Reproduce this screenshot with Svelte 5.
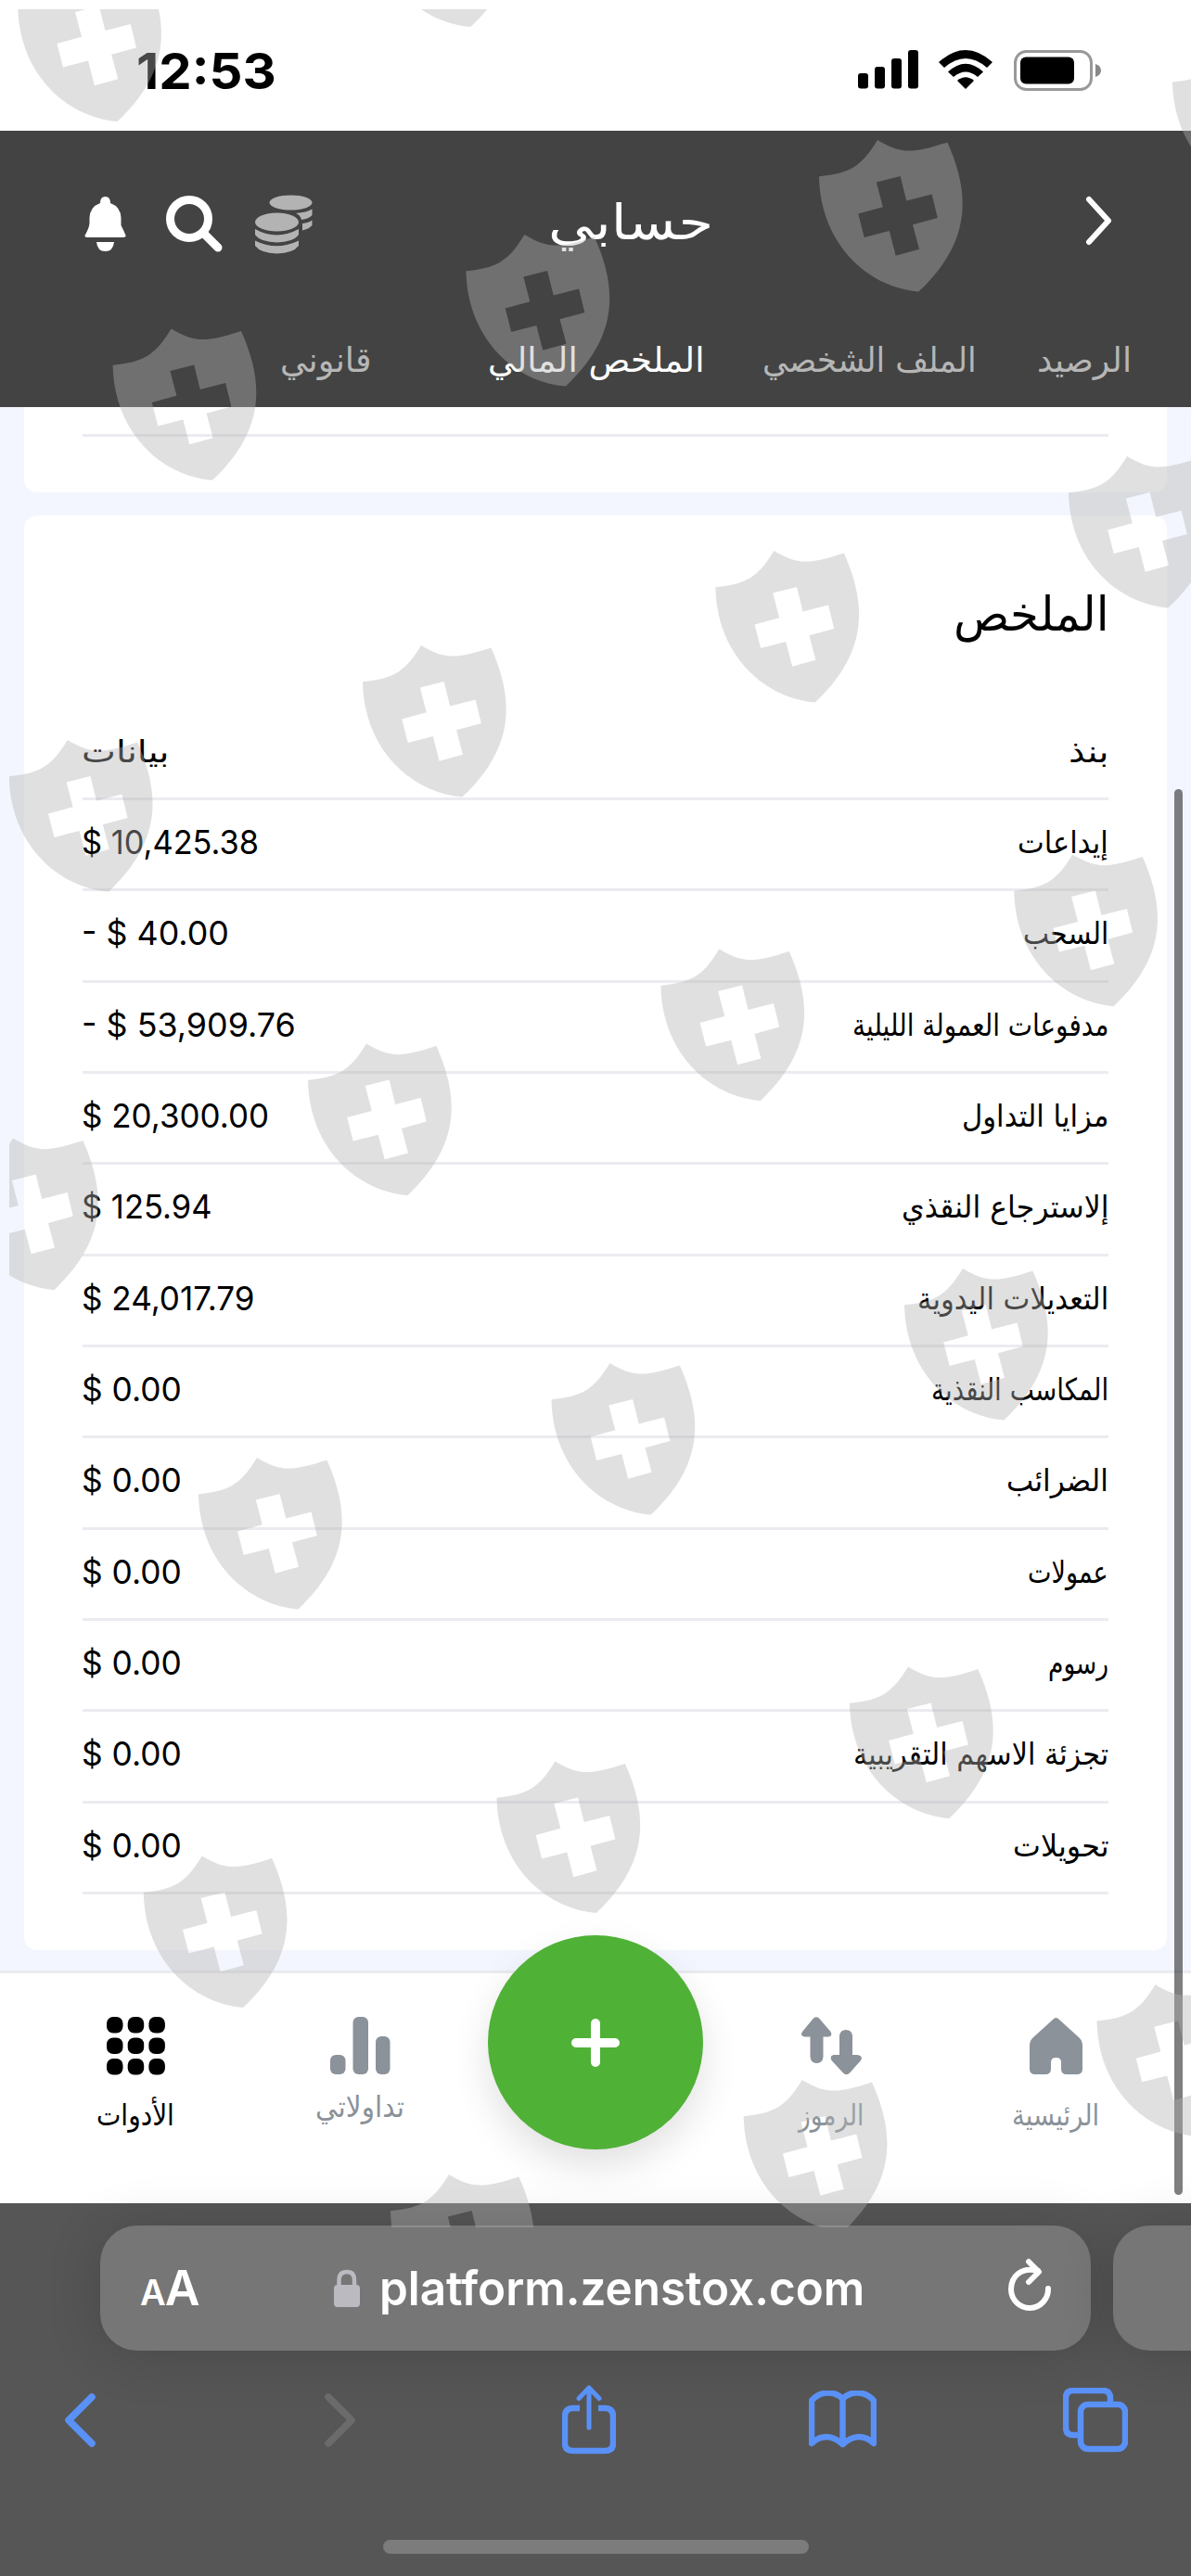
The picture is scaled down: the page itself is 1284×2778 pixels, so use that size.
<script>
  const tabs = [
    { name: "الرصيد", width: 102, gap: 65 },
    { name: "الملف الشخصي", width: 231, gap: 63 },
    { name: "الملخص المالي", width: 234, gap: 124, active: true },
    { name: "قانوني", width: 99, gap: 0 },
  ];

  const rows = [
    { label: "إيداعات", labelWidth: 98, value: "$ 10,425.38", valueWidth: 191 },
    { label: "السحب", labelWidth: 92, value: "- $ 40.00", valueWidth: 159 },
    {
      label: "مدفوعات العمولة الليلية",
      labelWidth: 276,
      value: "- $ 53,909.76",
      valueWidth: 231,
    },
    { label: "مزايا التداول", labelWidth: 158, value: "$ 20,300.00", valueWidth: 202 },
    { label: "إلاسترجاع النقذي", labelWidth: 223, value: "$ 125.94", valueWidth: 140 },
    { label: "التعديلات اليدوية", labelWidth: 206, value: "$ 24,017.79", valueWidth: 187 },
    { label: "المكاسب النقذية", labelWidth: 191, value: "$ 0.00", valueWidth: 108 },
    { label: "الضرائب", labelWidth: 110, value: "$ 0.00", valueWidth: 108 },
    { label: "عمولات", labelWidth: 87, value: "$ 0.00", valueWidth: 108 },
    { label: "رسوم", labelWidth: 65, value: "$ 0.00", valueWidth: 108 },
    {
      label: "تجزئة الاسهم التقريبية",
      labelWidth: 275,
      value: "$ 0.00",
      valueWidth: 108,
    },
    { label: "تحويلات", labelWidth: 103, value: "$ 0.00", valueWidth: 108 },
  ];

  const shields = [
    [19.2, -32.5],
    [400, -134.5],
    [1264, 49],
    [883, 151],
    [502.5, 253],
    [121.6, 354.5],
    [1152, 492],
    [771.4, 594],
    [391, 696],
    [9.8, 798],
    [1093.3, 921.6],
    [712.4, 1023.6],
    [332, 1125.6],
    [-49, 1227.6],
    [975, 1368],
    [594.5, 1470],
    [214, 1572],
    [916, 1797.5],
    [535.5, 1899.5],
    [154.8, 2001.5],
    [1182.5, 2140.3],
    [801.7, 2243],
    [421, 2345],
  ];

  const dots = [0, 1, 2, 3, 4, 5, 6, 7, 8];

  // Scales a text horizontally so that it fills the given width
  function squeeze(node, width) {
    const rtl = getComputedStyle(node).direction === "rtl";
    node.style.transformOrigin = rtl ? "right center" : "left center";
    node.style.transform = `scaleX(${width / node.offsetWidth})`;
  }
</script>

{#snippet fitted(text, width)}
  <span class="fitted" style:width="{width}px"
    ><span class="inner" use:squeeze={width}>{text}</span></span
  >
{/snippet}

<div class="screen">
  <div class="status">
    <div class="time">{@render fitted("12:53", 151)}</div>
    <svg class="signal" width="65" height="42" viewBox="0 0 65 42">
      <rect x="0" y="25" width="11" height="16.500" rx="3" />
      <rect x="18" y="18" width="11" height="23.500" rx="3" />
      <rect x="36" y="9" width="11" height="32.500" rx="3" />
      <rect x="54" y="0" width="11" height="41.500" rx="3" />
    </svg>
    <svg class="wifi" width="58" height="42" viewBox="0 0 58 42">
      <path d="M0 13 Q29 -13 58 13 L52 19 Q29 -1 6 19Z" />
      <path d="M10 23.500 Q29 6 48 23.500 L42 29 Q29 18 16 29Z" />
      <path d="M20 33 Q29 25.500 38 33 L29 42Z" />
    </svg>
    <svg width="95" height="44" viewBox="0 0 95 44">
      <rect x="1.500" y="1.500" width="82" height="41" rx="12" fill="none" stroke="#999" stroke-width="3" />
      <rect x="7" y="7.500" width="58" height="29" rx="6" />
      <path d="M88 15 Q94 17 94 22 Q94 27 88 29Z" fill="#888" />
    </svg>
  </div>

  <header dir="rtl">
    <div class="bar">
      <svg class="forward" width="30" height="54" viewBox="0 0 30 54">
        <path d="M4 4 L25 27 L4 50" />
      </svg>
      <h1>{@render fitted("حسابي", 178)}</h1>
      <svg class="coins" width="62" height="64" viewBox="0 0 62 64">
        <ellipse cx="38.500" cy="8.500" rx="23" ry="8" />
        <path d="M44 20 Q56 19 61.500 15.500 V22 Q58 26 50 27 Q49 22 44 20Z" />
        <path d="M51 31 Q58 30 61.500 27.500 V33 Q58 37 51 38.500Z" />
        <ellipse cx="23.500" cy="29.500" rx="23.500" ry="10" />
        <path d="M0 37 Q23 50 47 37 V43 Q42 51 23.500 51.500 Q5 51 0 43Z" />
        <path d="M0 49.500 Q23 61 47 49.500 V55 Q41 63 23.500 63.500 Q6 63 0 55Z" />
      </svg>
      <svg class="search" width="61" height="62" viewBox="0 0 61 62">
        <circle cx="25" cy="26" r="20.500" />
        <path d="M42 43 L56 57" />
      </svg>
      <svg class="bell" width="45" height="60" viewBox="0 0 45 60">
        <path
          d="M17 7 Q17 0 22.500 0 Q28 0 28 7 Q39 11 39.500 23 V31 Q44 40 44.500 42 Q45 44 42 44 H3 Q0 44 .5 42 Q5 34 5.500 29 V23 Q6 11 17 7Z"
        />
        <path d="M13 49 H32 Q31 59 22.500 59 Q14 59 13 49Z" />
      </svg>
    </div>
    <nav class="tabs">
      {#each tabs as tab}
        <span class:active={tab.active} style:margin-left="{tab.gap}px">
          {@render fitted(tab.name, tab.width)}
        </span>
      {/each}
    </nav>
  </header>

  <main dir="rtl">
    <div class="card previous">
      <div class="line"></div>
    </div>
    <div class="card summary">
      <h2>{@render fitted("الملخص", 167)}</h2>
      <div class="row head">
        {@render fitted("بنذ", 43)}
        <span class="value head">{@render fitted("بيانات", 95)}</span>
      </div>
      {#each rows as row}
        <div class="row">
          {@render fitted(row.label, row.labelWidth)}
          <span class="value" dir="ltr">{@render fitted(row.value, row.valueWidth)}</span>
        </div>
      {/each}
    </div>
    <div class="scrollbar"></div>
  </main>

  <nav class="bottom">
    <div class="item current">
      <svg width="63" height="63" viewBox="0 0 63 63">
        {#each dots as dot}
          <rect
            x={(dot % 3) * 22.7}
            y={Math.floor(dot / 3) * 22.5}
            width="17.500"
            height="17.500"
            rx="7"
          />
        {/each}
      </svg>
      {@render fitted("الأدوات", 84)}
    </div>
    <div class="item trades">
      <svg width="65" height="63" viewBox="0 0 65 63">
        <rect x="0" y="41" width="16.500" height="21" rx="6" />
        <rect x="24.500" y="0" width="16.500" height="62" rx="6" />
        <rect x="49" y="21" width="15.500" height="41" rx="6" />
      </svg>
      {@render fitted("تداولاتي", 96)}
    </div>
    <div class="item">
      <button aria-label="إضافة">
        <svg width="52" height="52" viewBox="0 0 52 52">
          <path d="M26 5 V47 M5 26 H47" />
        </svg>
      </button>
    </div>
    <div class="item">
      <svg width="65" height="63" viewBox="0 0 65 63">
        <path
          d="M13 1.500 Q16 -1 19 1.500 L31.500 16 Q34 21 29 21.500 H23.500 V43 Q23 50 16.500 50 Q10 50 9.500 43 V21.500 H4 Q-2 21 1 16Z"
        />
        <path
          d="M52 60.500 Q48.500 64 45 60.500 L32.500 47 Q30 42 35 41 H41 V20 Q42 14 48 14 Q54 14 55 20 V41 H60 Q67 42 64 47Z"
        />
      </svg>
      {@render fitted("الرموز", 70)}
    </div>
    <div class="item">
      <svg width="57" height="63" viewBox="0 0 57 63">
        <path
          d="M25 3 Q28.500 -1 32 3 L54 23 Q57 26 57 30 V56 Q57 62 51 62 H40 Q34 62 34 56 V49 Q34 44 28.500 44 Q23 44 23 49 V56 Q23 62 17 62 H6 Q0 62 0 56 V30 Q0 26 3 23Z"
        />
      </svg>
      {@render fitted("الرئيسية", 94)}
    </div>
  </nav>

  <footer>
    <div class="addresses">
      <div class="address">
        <span class="reader"><small>A</small>A</span>
        <div class="host">
          <svg width="28" height="42" viewBox="0 0 28 42">
            <rect x="0" y="17" width="28" height="24" rx="4" fill="#bbbac1" />
            <path d="M5.500 18 V12 Q5.500 3 14 3 Q22 3 22 12 V18" fill="none" stroke="#bbbac1" stroke-width="4.500" />
          </svg>
          {@render fitted("platform.zenstox.com", 523)}
        </div>
        <svg class="reload" width="48" height="58" viewBox="0 0 48 58">
          <path d="M33 14 C15 9 4 20 4 34 A20 20.500 0 0 0 44 33" />
          <path d="M23 4 L34 15 L23 26" />
        </svg>
      </div>
      <div class="address next"></div>
    </div>
    <div class="toolbar">
      <svg width="33" height="58" viewBox="0 0 33 58">
        <path d="M29 4 L4 29 L29 54" stroke-width="7.500" />
      </svg>
      <svg class="off" width="33" height="58" viewBox="0 0 33 58">
        <path d="M4 4 L29 29 L4 54" stroke-width="7.500" />
      </svg>
      <svg width="58" height="76" viewBox="0 0 58 76">
        <path d="M19 25 H12 Q3 25 3 34 V63 Q3 71 12 71 H46 Q55 71 55 63 V34 Q55 25 46 25 H39" stroke-linecap="butt" />
        <path d="M29 46 V4 M18 14.500 L29 3 L40 14.500" stroke-width="5" />
      </svg>
      <svg width="73" height="64" viewBox="0 0 73 64">
        <path
          d="M36.500 9 C28 0 12 0 3 11 V57 C13 47 26 48 36.500 58 C47 48 60 47 70 57 V11 C61 0 45 0 36.500 9Z M36.500 9 V58"
        />
      </svg>
      <svg width="70" height="70" viewBox="0 0 70 70">
        <path d="M17 51 H11 Q3 51 3 43 V11 Q3 3 11 3 H43 Q51 3 51 11 V17" stroke-linecap="butt" />
        <rect x="19" y="18" width="48" height="48" rx="8" />
      </svg>
    </div>
    <div class="home"></div>
  </footer>

  <svg class="watermark" width="1284" height="2778" viewBox="0 0 1284 2778">
    <clipPath id="area"><rect x="10" y="10" width="1274" height="2392" /></clipPath>
    <g clip-path="url(#area)">
      {#each shields as [x, y]}
        <path
          transform="translate({x} {y})"
          fill-rule="evenodd"
          d="M0 39.300 C34 36 46 28 63 0 C88 15 100 15 138.400 2.400 C165 62 162 112 107.300 163.600 C48 158 1 108 0 39.300Z
            M87.600 38.900 L94.200 65.400 L121.600 58.500 L127.800 84 L101 91.300 L108 117.800 L82.700 124.700 L75.800 98.100 L48.700 105 L42.200 79.500 L68.800 72.300 L61.800 45.500Z"
        />
      {/each}
    </g>
  </svg>
</div>

<style>
  :global(body) {
    margin: 0;
  }

  .screen {
    position: relative;
    display: flex;
    flex-direction: column;
    width: 1284px;
    height: 2778px;
    overflow: hidden;
    background-color: #fff;
    font-family: "DejaVu Sans", sans-serif;
    color: #000;
  }

  svg {
    display: block;
    flex: none;
  }

  h1,
  h2 {
    margin: 0;
    font-weight: normal;
  }

  .fitted {
    display: inline-block;
    white-space: nowrap;
  }

  .inner {
    display: inline-block;
  }

  /* Phone status bar */
  .status {
    display: flex;
    height: 87px;
    padding: 54px 96px 0 147px;
  }

  .time {
    flex: 1;
    font: 700 54px/46px "Inter", sans-serif;
  }

  .signal {
    margin-right: 22px;
  }

  .wifi {
    margin-right: 23px;
  }

  /* Header */
  header {
    display: flex;
    flex-direction: column;
    height: 298px;
    background-color: #434343;
    color: #fff;
  }

  .bar {
    display: flex;
    height: 194px;
    padding: 0 84px 0 91px;
    align-items: center;
  }

  .bar svg {
    fill: #fff;
  }

  .bar .forward,
  .bar .search {
    fill: none;
    stroke: #fff;
    stroke-width: 6;
    stroke-linecap: round;
    stroke-linejoin: round;
  }

  .bar .search {
    margin: 5px 35px 0 43px;
    stroke-width: 9;
  }

  .bar .coins {
    fill: #b3b3b3;
    margin-top: 7px;
  }

  .bar .bell {
    margin: 8px 0 0;
  }

  h1 {
    margin: 3px 401px 0 auto;
    font-size: 53px;
    line-height: 60px;
  }

  .tabs {
    display: flex;
    padding-right: 64px;
    font-size: 37px;
    line-height: 44px;
    margin-top: 32px;
    color: #b6b6b6;
  }

  .tabs .active {
    color: #fff;
  }

  /* Cards */
  main {
    position: relative;
    box-sizing: border-box;
    height: 1686px;
    padding: 0 26px;
    background-color: #f3f6fe;
  }

  .card {
    box-sizing: border-box;
    padding: 0 63px;
    background-color: #fff;
    border-radius: 14px;
  }

  .previous {
    height: 92px;
    padding-top: 29px;
    margin-bottom: 25px;
    border-radius: 0 0 14px 14px;
  }

  .line {
    height: 3px;
    background-color: #ebebf0;
  }

  .summary {
    height: 1547px;
  }

  h2 {
    box-sizing: border-box;
    height: 208.700px;
    padding-top: 77px;
    font-size: 51px;
    line-height: 60px;
  }

  .row {
    display: flex;
    box-sizing: border-box;
    height: 98.330px;
    padding-top: 25px;
    justify-content: space-between;
    border-bottom: 3px solid #ebebf0;
    font-size: 33px;
    line-height: 42px;
  }

  .value {
    margin-left: -1px;
    font-family: "Inter", sans-serif;
    font-size: 36px;
    line-height: 40px;
  }

  .value.head {
    font-family: "DejaVu Sans", sans-serif;
    font-size: 33px;
    line-height: 42px;
  }

  .scrollbar {
    position: absolute;
    z-index: 2;
    top: 412px;
    right: 9px;
    width: 9px;
    height: 1516px;
    border-radius: 5px;
    background-color: rgba(0, 0, 0, 0.5);
  }

  /* Bottom navigation, its button overlaps the cards */
  .bottom {
    position: relative;
    z-index: 1;
    display: grid;
    grid-template-columns: 242px 242px 266px 242px 242px;
    box-sizing: border-box;
    height: 251px;
    padding: 0 25px;
    border-top: 3px solid #ebebf0;
    background-color: #fff;
  }

  .item {
    display: flex;
    flex-direction: column;
    align-items: center;
    padding-top: 47px;
    color: #8b9299;
    fill: #8b9299;
    font-size: 32px;
    line-height: 40px;
    gap: 23px;
  }

  .item.current {
    color: #000;
    fill: #000;
  }

  .item.trades {
    gap: 14px;
  }

  button {
    display: flex;
    align-items: center;
    justify-content: center;
    flex: none;
    width: 232px;
    height: 231px;
    margin-top: -88px;
    border: none;
    border-radius: 50%;
    background-color: #4fb136;
    box-shadow: 0 18px 40px rgba(0, 0, 0, 0.12);
  }

  button path {
    stroke: #fff;
    stroke-width: 10;
    stroke-linecap: round;
  }

  /* Browser controls */
  footer {
    position: relative;
    z-index: 1;
    height: 402px;
    background-color: #565656;
  }

  .addresses {
    display: flex;
    gap: 24px;
    padding: 24px 0 0 108px;
  }

  .address {
    display: flex;
    align-items: center;
    box-sizing: border-box;
    flex: none;
    width: 1068px;
    height: 135px;
    padding: 0 42px 0 43px;
    border-radius: 40px;
    background-color: #767676;
    box-shadow: 0 4px 60px rgba(0, 0, 0, 0.16);
    color: #fff;
    font: 600 51px/60px "Inter", sans-serif;
  }

  .next {
    width: 160px;
  }

  .reader {
    width: 209px;
    margin-top: 5px;
    font-size: 52px;
    letter-spacing: -1px;
  }

  .reader small {
    font-size: 38px;
  }

  .host {
    display: flex;
    align-items: center;
    flex: 1;
    gap: 21px;
  }

  .reload {
    margin-top: -7px;
    fill: none;
    stroke: #fff;
    stroke-width: 6;
    stroke-linecap: round;
    stroke-linejoin: round;
  }

  .toolbar {
    display: grid;
    grid-template-columns: 280px 256px 266px 274px 70px;
    align-items: center;
    height: 76px;
    padding: 37px 0 0 70px;
    fill: none;
    stroke: #5a91f7;
    stroke-width: 6.500;
    stroke-linecap: round;
    stroke-linejoin: round;
  }

  .toolbar .off {
    stroke: #6b6b6b;
  }

  .home {
    width: 459px;
    height: 15px;
    margin: 91px auto 0;
    border-radius: 8px;
    background-color: #7c7c7c;
  }

  .watermark {
    position: absolute;
    z-index: 3;
    top: 0;
    left: 0;
    fill: rgba(179, 179, 179, 0.404);
    pointer-events: none;
  }
</style>
